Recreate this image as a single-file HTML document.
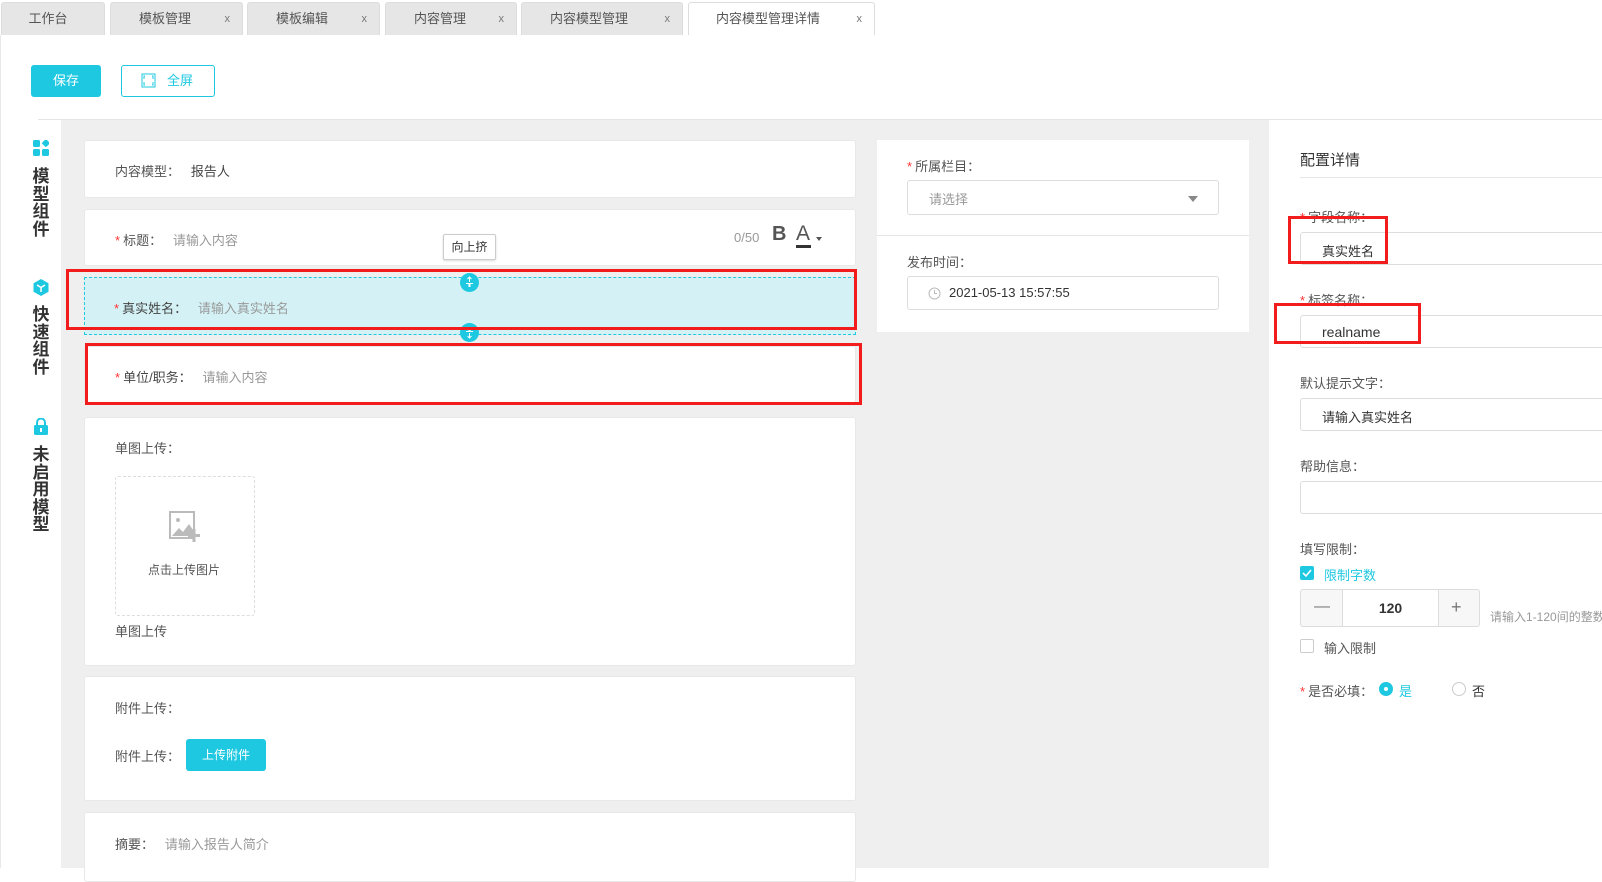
<!DOCTYPE html>
<html><head><meta charset="utf-8"><style>
*{box-sizing:border-box;margin:0;padding:0}
body{width:1602px;height:868px;overflow:hidden;background:#fff;font-family:"Liberation Sans","Noto Sans CJK SC",sans-serif;font-size:13px;color:#555;position:relative}
.a{position:absolute}
.tab{position:absolute;top:2px;height:33px;background:#e6e6e6;border:1px solid #ddd;border-bottom:none;border-radius:3px 3px 0 0;color:#555;font-size:13px;line-height:32px}
.tab .x{position:absolute;right:12px;top:0;color:#777;font-size:11px}
.card{position:absolute;left:84px;width:772px;background:#fff;border-radius:3px;border:1px solid #e8e8e8}
.lbl{position:absolute;font-size:13px;color:#555}
.ph{color:#999}
.req{color:#f33;margin-right:3px}
.inp{position:absolute;border:1px solid #ddd;border-radius:3px;background:#fff}
.vt{position:absolute;left:31px;width:20px;font-size:17px;font-weight:bold;color:#333;line-height:17.5px;text-align:center}
.red{position:absolute;border:3px solid #f21c1c}
</style></head><body>
<div class="a" style="left:0;top:0;width:1602px;height:35px;background:#fff"></div>
<div class="tab" style="left:1px;width:104px;text-align:center;padding-right:10px">工作台</div>
<div class="tab" style="left:110px;width:133px;padding-left:28px">模板管理<span class="x">x</span></div>
<div class="tab" style="left:247px;width:133px;padding-left:28px">模板编辑<span class="x">x</span></div>
<div class="tab" style="left:385px;width:132px;padding-left:28px">内容管理<span class="x">x</span></div>
<div class="tab" style="left:521px;width:162px;padding-left:28px">内容模型管理<span class="x">x</span></div>
<div class="tab" style="left:688px;width:187px;padding-left:27px;background:#fff">内容模型管理详情<span class="x">x</span></div>
<div class="a" style="left:31px;top:65px;width:70px;height:32px;background:#1fc8e1;border-radius:3px;color:#fff;font-size:13px;line-height:32px;text-align:center">保存</div>
<div class="a" style="left:121px;top:65px;width:94px;height:32px;border:1px solid #1fc8e1;border-radius:3px;color:#1fc8e1;font-size:13px;line-height:30px;padding-left:45px">全屏</div>
<svg class="a" style="left:141px;top:73px" width="15" height="15" viewBox="0 0 15 15"><rect x="1" y="1" width="13" height="13" fill="none" stroke="#1fc8e1" stroke-width="1"/><path d="M4 3H3V6M11 3h1v3M4 12H3V9M11 12h1V9" stroke="#1fc8e1" fill="none"/></svg>
<div class="a" style="left:38px;top:119px;width:1564px;height:1px;background:#e4e4e4"></div>
<div class="a" style="left:61px;top:120px;width:1208px;height:748px;background:#efefef"></div>
<div class="a" style="left:0;top:35px;width:1px;height:833px;background:#e8e8e8"></div>
<svg class="a" style="left:33px;top:140px" width="16" height="16" viewBox="0 0 16 16"><rect x="0" y="0" width="7" height="7" rx="1.5" fill="#1fc8e1"/><rect x="0" y="9" width="7" height="7" rx="1.5" fill="#1fc8e1"/><rect x="9" y="9" width="7" height="7" rx="1.5" fill="#1fc8e1"/><rect x="9.5" y="0" width="6" height="6" rx="1" fill="#1fc8e1" transform="rotate(45 12.5 3.5)"/></svg>
<div class="vt" style="top:168px">模<br>型<br>组<br>件</div>
<svg class="a" style="left:33px;top:279px" width="16" height="17" viewBox="0 0 16 17"><path d="M8 0L15.5 4.2V12.8L8 17L0.5 12.8V4.2Z" fill="#1fc8e1"/><path d="M4 6L8 8.5L12 6M8 8.5V13" stroke="#fff" stroke-width="1.5" fill="none"/></svg>
<div class="vt" style="top:306px">快<br>速<br>组<br>件</div>
<svg class="a" style="left:34px;top:418px" width="14" height="17" viewBox="0 0 14 17"><path d="M3 7V4.5a4 4 0 0 1 8 0V7" stroke="#1fc8e1" stroke-width="2" fill="none"/><rect x="0" y="7" width="14" height="10" rx="1.5" fill="#1fc8e1"/><rect x="6" y="10" width="2" height="4" fill="#fff"/></svg>
<div class="vt" style="top:446px">未<br>启<br>用<br>模<br>型</div>
<div class="card" style="top:140px;height:58px"><div class="lbl" style="left:30px;top:20px">内容模型：&nbsp;&nbsp;&nbsp;<span style="color:#444">报告人</span></div></div>
<div class="card" style="top:209px;height:57px">
 <div class="lbl" style="left:30px;top:20px"><span class="req">*</span>标题：&nbsp;&nbsp;&nbsp;<span class="ph">请输入内容</span></div>
 <div class="lbl ph" style="left:649px;top:20px">0/50</div>
 <div class="a" style="left:687px;top:13px;font-size:20px;font-weight:bold;color:#555">B</div>
 <div class="a" style="left:711px;top:12px;font-size:21px;color:#555">A</div>
 <div class="a" style="left:711px;top:35px;width:15px;height:3px;background:#333"></div>
 <div class="a" style="left:731px;top:27px;border:3px solid transparent;border-top:4px solid #555"></div>
</div>
<div class="a" style="left:443px;top:234px;width:53px;height:26px;background:#fff;border:1px solid #ccc;border-radius:2px;box-shadow:0 1px 2px rgba(0,0,0,.15);font-size:12px;color:#333;line-height:24px;text-align:center">向上挤</div>
<div class="a" style="left:84px;top:277px;width:772px;height:58px;background:#d4f2f6;border:1px dashed #1fc8e1"></div>
<div class="lbl" style="left:114px;top:298px"><span class="req">*</span><span style="color:#444">真实姓名：</span>&nbsp;&nbsp;&nbsp;<span class="ph">请输入真实姓名</span></div>
<div class="a" style="left:460px;top:273px;width:19px;height:19px;border-radius:50%;background:#1fc8e1"><svg width="19" height="19"><path d="M9.5 4V9M7.5 6L9.5 4L11.5 6M6 10.5H9V14M13 10.5H10V14" stroke="#fff" fill="none"/></svg></div>
<div class="a" style="left:460px;top:323px;width:19px;height:19px;border-radius:50%;background:#1fc8e1"><svg width="19" height="19"><path d="M6 8.5H9V5M13 8.5H10V5M9.5 10V15M7.5 13L9.5 15L11.5 13" stroke="#fff" fill="none"/></svg></div>
<div class="red" style="left:66px;top:269px;width:791px;height:61px"></div>
<div class="card" style="top:346px;height:57px"><div class="lbl" style="left:30px;top:20px"><span class="req">*</span><span style="color:#444">单位/职务：</span>&nbsp;&nbsp;&nbsp;<span class="ph">请输入内容</span></div></div>
<div class="red" style="left:85px;top:343px;width:777px;height:62px"></div>
<div class="card" style="top:417px;height:249px">
 <div class="lbl" style="left:30px;top:20px">单图上传：</div>
 <div class="a" style="left:30px;top:58px;width:140px;height:140px;border:1px dashed #ddd;border-radius:3px"></div>
 <svg class="a" style="left:84px;top:93px" width="32" height="32" viewBox="0 0 32 32"><rect x="1" y="1" width="24" height="26" fill="none" stroke="#bbb" stroke-width="2"/><circle cx="9" cy="9" r="2" fill="#bbb"/><path d="M3 25L10 17L14 21L20 13L24 19V25Z" fill="#bbb"/><path d="M25 18V31M19 24.5H31" stroke="#bbb" stroke-width="3"/></svg>
 <div class="lbl" style="left:63px;top:143px;font-size:12px">点击上传图片</div>
 <div class="lbl" style="left:30px;top:203px">单图上传</div>
</div>
<div class="card" style="top:676px;height:125px">
 <div class="lbl" style="left:30px;top:21px">附件上传：</div>
 <div class="lbl" style="left:30px;top:69px">附件上传：</div>
 <div class="a" style="left:101px;top:62px;width:80px;height:32px;background:#1fc8e1;border-radius:3px;color:#fff;font-size:12px;line-height:32px;text-align:center">上传附件</div>
</div>
<div class="card" style="top:812px;height:70px"><div class="lbl" style="left:30px;top:21px">摘要：&nbsp;&nbsp;&nbsp;<span class="ph">请输入报告人简介</span></div></div>
<div class="a" style="left:877px;top:140px;width:372px;height:192px;background:#fff"></div>
<div class="a" style="left:877px;top:235px;width:372px;height:1px;background:#e6e6e6"></div>
<div class="lbl" style="left:907px;top:156px"><span class="req">*</span>所属栏目：</div>
<div class="inp" style="left:907px;top:180px;width:312px;height:35px"><span class="ph" style="position:absolute;left:21px;top:8px">请选择</span><span style="position:absolute;right:20px;top:15px;border:5px solid transparent;border-top:6px solid #888"></span></div>
<div class="lbl" style="left:907px;top:252px">发布时间：</div>
<div class="inp" style="left:907px;top:276px;width:312px;height:34px"><svg class="a" style="left:20px;top:10px" width="13" height="13" viewBox="0 0 13 13"><circle cx="6.5" cy="6.5" r="5.5" fill="none" stroke="#bbb"/><path d="M6.5 3V6.5H9" stroke="#bbb" fill="none"/></svg><span style="position:absolute;left:41px;top:8px;color:#333">2021-05-13 15:57:55</span></div>
<div class="a" style="left:1300px;top:149px;font-size:15px;color:#333">配置详情</div>
<div class="a" style="left:1300px;top:177px;width:302px;height:1px;background:#e6e6e6"></div>
<div class="lbl" style="left:1300px;top:207px"><span class="req">*</span>字段名称：</div>
<div class="inp" style="left:1300px;top:232px;width:310px;height:33px"><span style="position:absolute;left:21px;top:8px;color:#333">真实姓名</span></div>
<div class="red" style="left:1288px;top:216px;width:100px;height:48px"></div>
<div class="lbl" style="left:1300px;top:290px"><span class="req">*</span>标签名称：</div>
<div class="inp" style="left:1300px;top:315px;width:310px;height:33px"><span style="position:absolute;left:21px;top:8px;color:#333;font-size:14px">realname</span></div>
<div class="red" style="left:1274px;top:303px;width:147px;height:41px"></div>
<div class="lbl" style="left:1300px;top:373px">默认提示文字：</div>
<div class="inp" style="left:1300px;top:398px;width:310px;height:33px"><span style="position:absolute;left:21px;top:8px;color:#333">请输入真实姓名</span></div>
<div class="lbl" style="left:1300px;top:456px">帮助信息：</div>
<div class="inp" style="left:1300px;top:481px;width:310px;height:33px"></div>
<div class="lbl" style="left:1300px;top:539px">填写限制：</div>
<div class="a" style="left:1300px;top:566px;width:14px;height:14px;background:#1fc8e1;border-radius:2px"><svg width="14" height="14"><path d="M3 7L6 10L11 4" stroke="#fff" stroke-width="1.6" fill="none"/></svg></div>
<div class="lbl" style="left:1324px;top:565px;color:#1fc8e1">限制字数</div>
<div class="inp" style="left:1300px;top:589px;width:180px;height:38px;background:#f7f7f7">
 <div class="a" style="left:41px;top:0;width:97px;height:36px;background:#fff;border-left:1px solid #ddd;border-right:1px solid #ddd;text-align:center;line-height:36px;font-weight:bold;color:#333;font-size:14px">120</div>
 <div class="a" style="left:13px;top:8px;font-size:16px;color:#777">—</div>
 <div class="a" style="left:150px;top:7px;font-size:18px;color:#777">+</div>
</div>
<div class="lbl" style="left:1490px;top:608px;font-size:12px;color:#999;white-space:nowrap">请输入1-120间的整数</div>
<div class="a" style="left:1300px;top:639px;width:14px;height:14px;border:1px solid #ccc;border-radius:2px"></div>
<div class="lbl" style="left:1324px;top:638px">输入限制</div>
<div class="lbl" style="left:1300px;top:681px"><span class="req">*</span>是否必填：</div>
<div class="a" style="left:1379px;top:682px;width:14px;height:14px;border-radius:50%;background:#1fc8e1"><div class="a" style="left:5px;top:5px;width:4px;height:4px;border-radius:50%;background:#fff"></div></div>
<div class="lbl" style="left:1399px;top:681px;color:#1fc8e1">是</div>
<div class="a" style="left:1452px;top:682px;width:14px;height:14px;border-radius:50%;border:1px solid #ccc"></div>
<div class="lbl" style="left:1472px;top:681px;color:#333">否</div>
</body></html>
